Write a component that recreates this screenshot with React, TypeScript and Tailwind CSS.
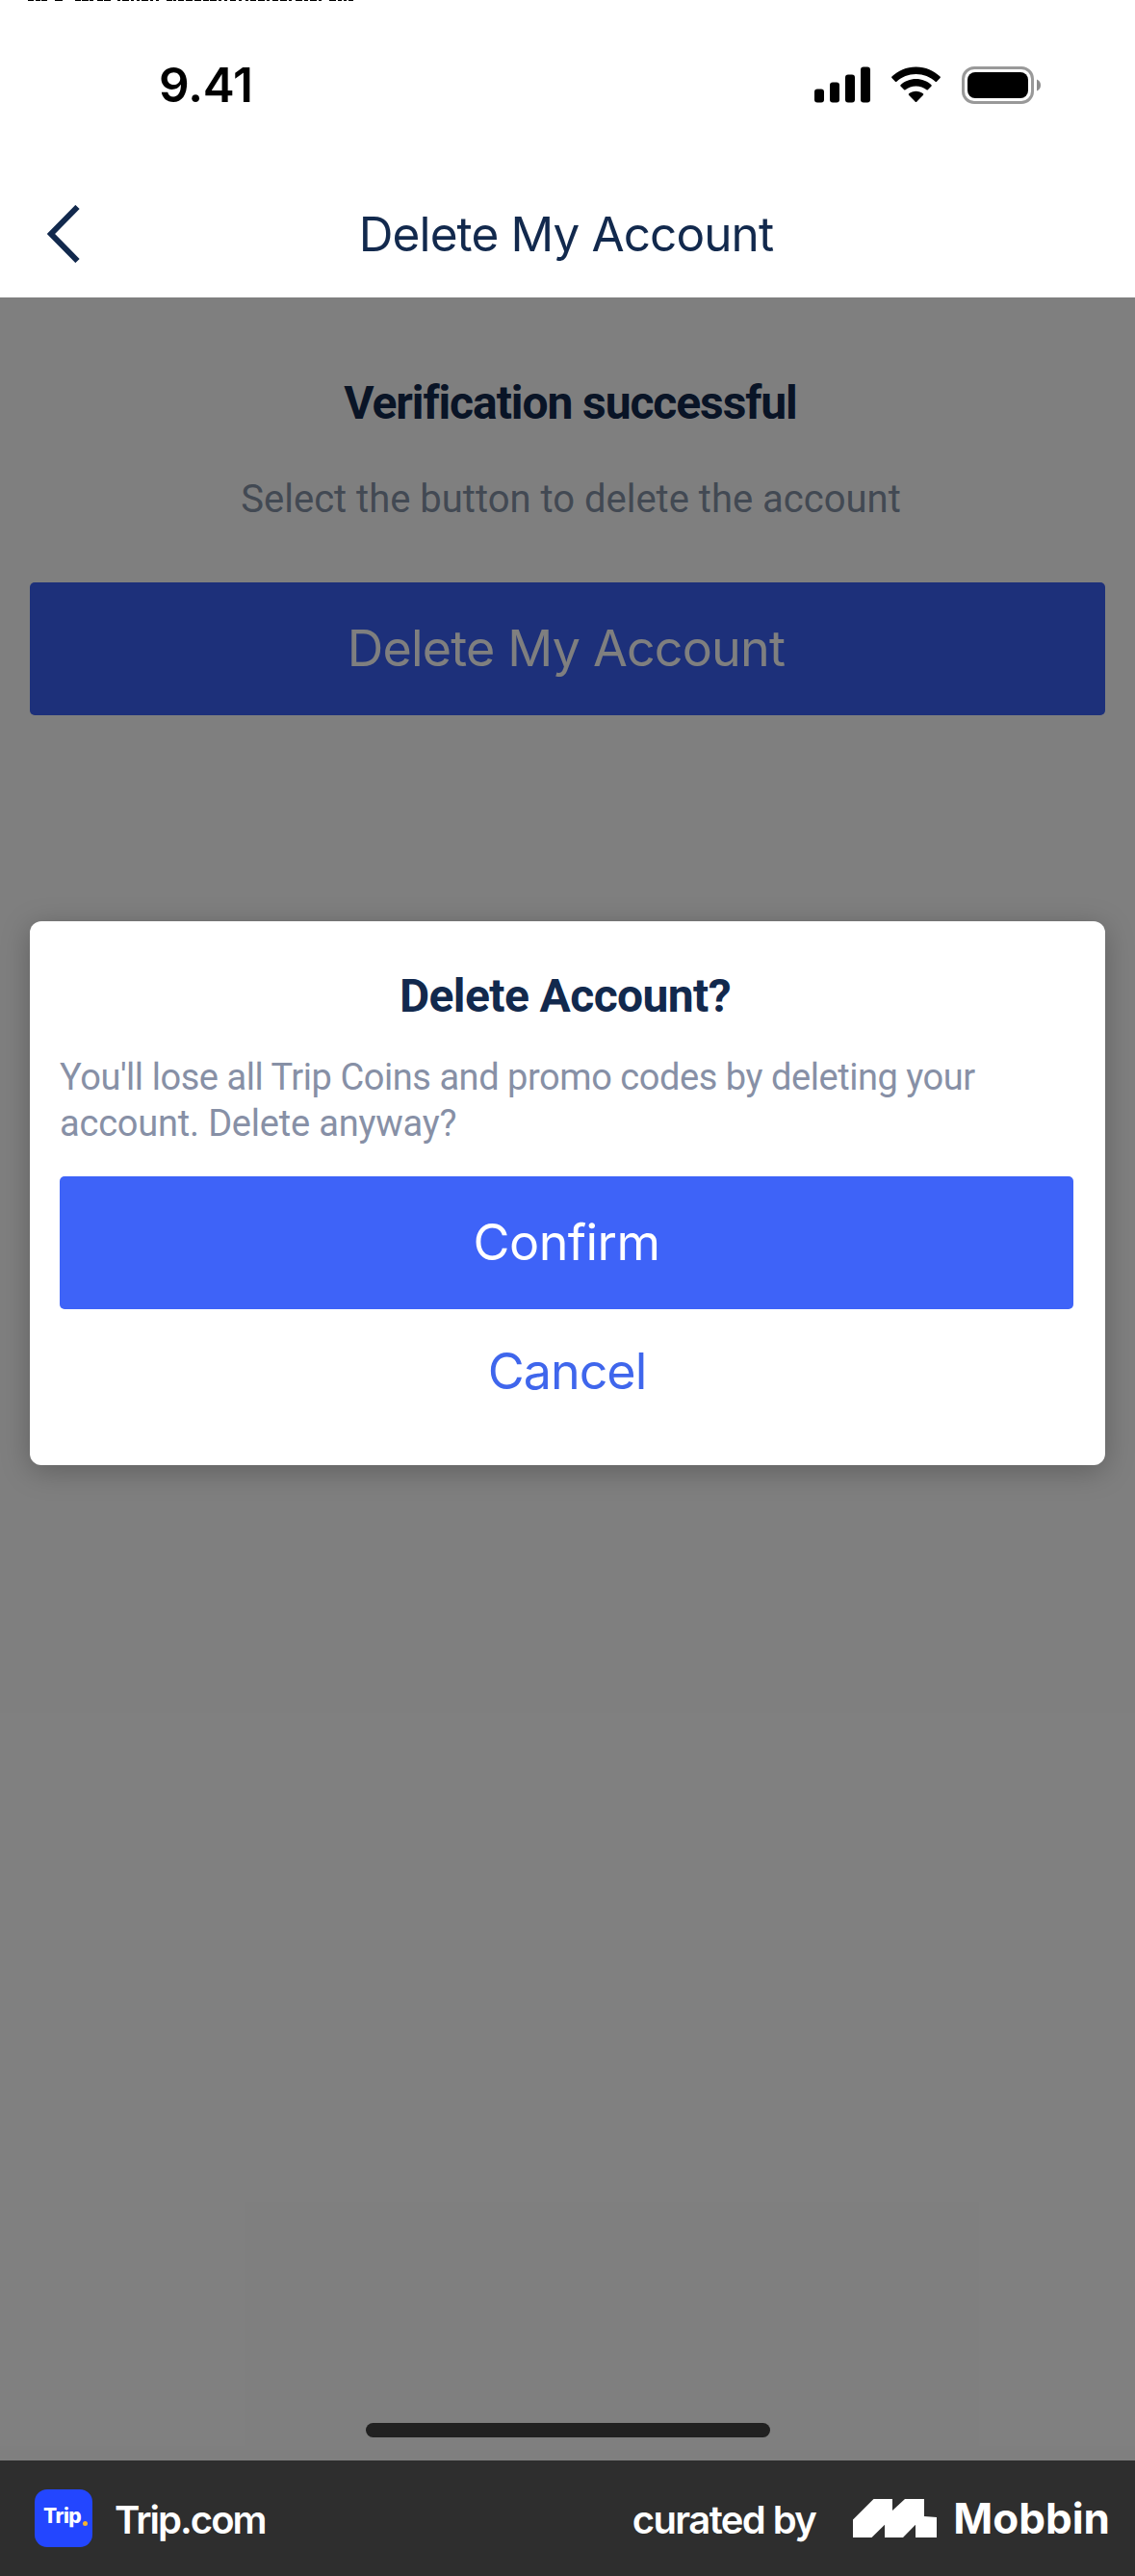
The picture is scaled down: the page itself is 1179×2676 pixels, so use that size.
import React, { useState } from 'react';

interface ButtonProps {
  label: string;
  className: string;
  onClick?: () => void;
}

// bottoms of the text line that is scrolled off above the status bar: [x, width]
const clippedLine: [number, number][] = [
  [29, 6], [37, 5], [43, 6], [57, 8], [78, 6], [85, 7], [93, 4], [101, 6], [108, 7], [122, 3], [127, 7],
  [136, 3], [142, 3], [147, 7], [156, 3], [162, 3], [173, 6], [180, 3], [185, 6], [193, 7], [202, 7], [211, 6],
  [218, 7], [227, 3], [233, 3], [239, 6], [248, 3], [255, 3], [260, 6], [268, 7], [277, 3], [283, 6], [291, 7],
  [300, 3], [307, 7], [316, 4], [322, 7], [331, 3], [342, 7], [351, 4], [357, 3], [362, 5],
];

const StatusBar: React.FC = () => (
  <div className="flex h-[177px] items-center justify-between pr-[97px] pb-px pl-[165px]">
    <span className="font-['Inter',sans-serif] text-[49.5px] leading-[60px] font-semibold tracking-[-0.15px] text-black">9.41</span>
    <div className="flex items-center">
      <svg className="h-[38px] w-[58px]" viewBox="0 0 58 38">
        <rect x="0" y="23.5" width="10" height="14" rx="3" />
        <rect x="16" y="16.5" width="10" height="21" rx="3" />
        <rect x="32" y="8.5" width="10" height="29" rx="3" />
        <rect x="48" y="0.5" width="10" height="37" rx="3" />
      </svg>
      <svg className="ml-[22px] h-[38px] w-[51px]" viewBox="0 0 51 38">
        <path d="M25.5 0.5C35.4 0.5 44.2 4.4 50.6 10.6C51 11 51 11.6 50.6 12L47 15.7C46.6 16.1 46 16.1 45.6 15.7C40.4 10.8 33.3 7.9 25.5 7.9S10.6 10.8 5.4 15.7C5 16.1 4.4 16.1 4 15.7L0.4 12C0 11.6 0 11 0.4 10.6C6.8 4.4 15.6 0.5 25.5 0.5Z" />
        <path d="M25.5 13C31.7 13 37.3 15.3 41.5 19.2C41.9 19.6 41.9 20.2 41.5 20.6L37.8 24.3C37.4 24.7 36.9 24.7 36.5 24.3C33.5 21.8 29.7 20.4 25.5 20.4S17.5 21.8 14.5 24.3C14.1 24.7 13.6 24.7 13.2 24.3L9.5 20.6C9.1 20.2 9.1 19.6 9.5 19.2C13.7 15.3 19.3 13 25.5 13Z" />
        <path d="M25.5 25.8C28.3 25.8 30.9 26.7 32.9 28.3C33.4 28.7 33.4 29.3 33 29.7L26.2 36.7C25.8 37.1 25.2 37.1 24.8 36.7L18 29.7C17.6 29.3 17.6 28.7 18.1 28.3C20.1 26.7 22.7 25.8 25.5 25.8Z" />
      </svg>
      <svg className="ml-[22px] h-[39px] w-[83px]" viewBox="0 0 83 39">
        <rect x="1.5" y="1.5" width="72" height="36" rx="11.5" fill="none" stroke="#999999" strokeWidth="3" />
        <rect x="6" y="6" width="63" height="27" rx="8" />
        <path d="M78 13.5C80.5 14.5 82 16.7 82 19.5S80.5 24.5 78 25.5Z" fill="#8c8c8c" />
      </svg>
    </div>
  </div>
);

const PrimaryButton: React.FC<ButtonProps> = ({ label, className, onClick }) => (
  <button
    onClick={onClick}
    className={`h-[138px] w-full rounded-[5px] font-['Inter',sans-serif] text-[52px] font-normal text-white ${className}`}
  >
    {label}
  </button>
);

const Footer: React.FC = () => (
  <footer className="flex h-[120px] items-center justify-between bg-[#2e2e2e] pr-[26px] pl-9 font-['Inter',sans-serif] text-white">
    <div className="flex items-center">
      <div className="flex size-[60px] items-center rounded-[13px] bg-[#2346ff] pb-1 pl-[9px]">
        <span className="text-[21px] font-extrabold tracking-[-0.5px]">Trip</span>
        <span className="mt-[14px] ml-[2px] size-[5px] rounded-full bg-[#f5b32e]" />
      </div>
      <span className="mt-[3px] ml-[23px] text-[40px] font-semibold tracking-[-1.95px]">Trip.com</span>
    </div>
    <div className="flex items-center">
      <span className="mt-[3px] text-[40px] font-semibold tracking-[-1.6px]">curated by</span>
      <svg className="ml-[39px] h-10 w-[87px]" viewBox="0 0 87 40" fill="currentColor">
        <path d="M0 21.5L21.5 0H41V12L54 0H74V18L87 19V40H65V26.7L52 40H33V26.7L19.5 40H0Z" />
      </svg>
      <span className="ml-[17px] text-[44px] font-bold">Mobbin</span>
    </div>
  </footer>
);

export default function App() {
  const [isOpen, setIsOpen] = useState(true);

  return (
    <div className="relative flex h-[2676px] w-[1179px] flex-col overflow-hidden bg-white">
      <svg className="absolute top-0 left-0 h-px w-[400px]" viewBox="0 0 400 1" fill="#000000">
        {clippedLine.map(([x, w]) => (
          <rect key={x} x={x} y="0" width={w} height="1" />
        ))}
      </svg>

      <StatusBar />

      <header className="grid h-[132px] grid-cols-[120px_1fr_120px] items-center">
        <button className="pl-[49px]">
          <svg className="h-[60px] w-[34px]" viewBox="0 0 34 60" fill="none" stroke="#12294d" strokeWidth="6">
            <path d="M31.5 2L4 30L31.5 58" />
          </svg>
        </button>
        <h1 className="pr-[3px] text-center font-['Inter',sans-serif] text-[49.5px] leading-[60px] font-normal tracking-[-0.9px] text-[#12294d]">
          Delete My Account
        </h1>
      </header>

      <main className="relative flex-1">
        <div className="flex flex-col items-center px-[31px] pt-20 font-['Roboto',sans-serif]">
          <h2 className="pl-[6px] text-[48px] leading-[60px] font-bold tracking-[-1.09px] text-[#12294d]">Verification successful</h2>
          <p className="mt-[45px] pl-[7px] text-[40px] leading-[50px] text-[#8592a6]">Select the button to delete the account</p>
          <div className="mt-[61px] w-full">
            <PrimaryButton label="Delete My Account" className="bg-[#3a60f4] pr-[3px] tracking-[-0.82px]" onClick={() => setIsOpen(true)} />
          </div>
        </div>

        {isOpen && (
          <div className="absolute inset-0 bg-black/50 px-[31px] pt-[648px]">
            <div className="flex flex-col rounded-xl bg-white pt-12 pr-[33px] pb-8 pl-[31px] font-['Roboto',sans-serif] shadow-[0_6px_30px_rgba(0,0,0,0.25)]">
              <h3 className="pr-[3px] text-center text-[48px] leading-[60px] font-bold tracking-[-0.6px] text-[#12294d]">Delete Account?</h3>
              <p className="mt-[30px] text-[38px] leading-[48px] tracking-[-0.45px] text-[#8790a6]">
                You'll lose all Trip Coins and promo codes by deleting your
                <br />
                <span className="tracking-[-0.2px]">account. Delete anyway?</span>
              </p>
              <div className="mt-[31px]">
                <PrimaryButton label="Confirm" className="bg-[#3e63f8] tracking-[-0.55px]" />
              </div>
              <button
                onClick={() => setIsOpen(false)}
                className="h-[130px] w-full pl-px font-['Inter',sans-serif] text-[52px] tracking-[-1px] text-[#3f66ec]"
              >
                Cancel
              </button>
            </div>
          </div>
        )}

        <div className="absolute bottom-6 left-[380px] h-[15px] w-[420px] rounded-full bg-[#212121]" />
      </main>

      <Footer />
    </div>
  );
}
